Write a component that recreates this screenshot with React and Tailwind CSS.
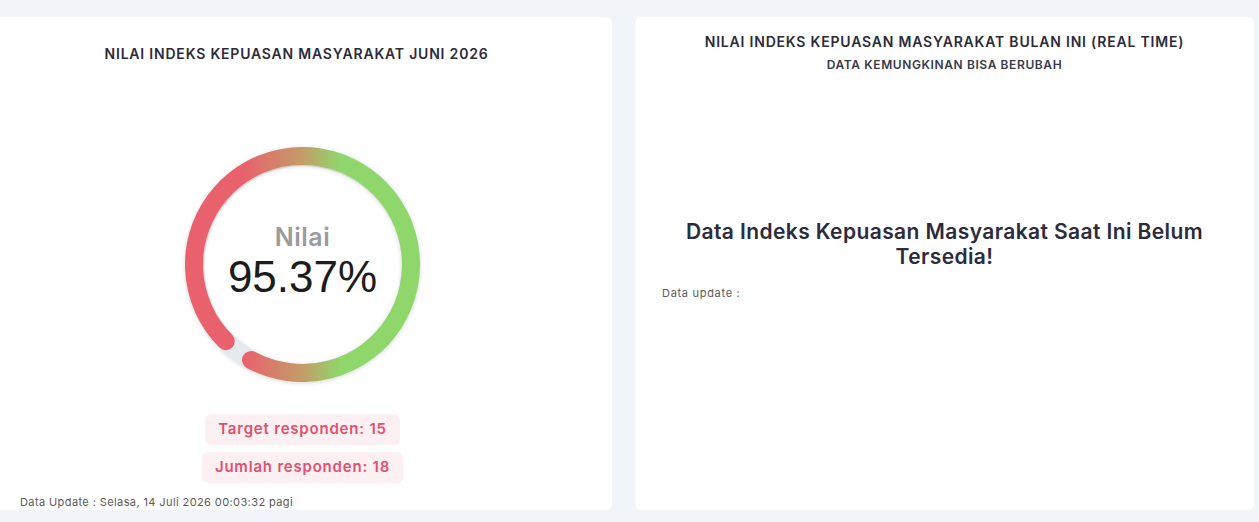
import React from "react"

const score = 95.37

// point on the ring, angle measured clockwise from 12 o'clock
function polar(c, r, deg) {
  const a = ((deg - 90) * Math.PI) / 180
  return [c + r * Math.cos(a), c + r * Math.sin(a)]
}

function Gauge({ value }) {
  const size = 235
  const stroke = 18
  const c = size / 2
  const r = (size - stroke) / 2
  const sweep = (360 * value) / 100
  const start = 225
  const [x1, y1] = polar(c, r, start)
  const [xm, ym] = polar(c, r, start + sweep / 2)
  const [x2, y2] = polar(c, r, start + sweep)
  const d = `M ${x1} ${y1} A ${r} ${r} 0 0 1 ${xm} ${ym} A ${r} ${r} 0 0 1 ${x2} ${y2}`

  return (
    <div className="grid place-items-center w-[235px] h-[235px]">
      <svg
        width={size}
        height={size}
        viewBox={`0 0 ${size} ${size}`}
        className="col-start-1 row-start-1 drop-shadow-[0_1px_2px_rgba(0,0,0,0.15)]"
      >
        <defs>
          <linearGradient id="ring" gradientUnits="userSpaceOnUse" x1="0" y1="0" x2={size} y2="0">
            <stop offset="0.25" stopColor="#e9616c" />
            <stop offset="0.5" stopColor="#c39d68" />
            <stop offset="0.66" stopColor="#8fd66b" />
          </linearGradient>
        </defs>
        <circle cx={c} cy={c} r={r} fill="none" stroke="#e4eaee" strokeWidth={stroke} />
        <path d={d} fill="none" stroke="url(#ring)" strokeWidth={stroke} strokeLinecap="round" />
      </svg>
      <div className="col-start-1 row-start-1 w-[198px] h-[198px] rounded-full bg-white shadow-[0_0_8px_rgba(0,0,0,0.22)] flex flex-col items-center justify-center">
        <div className="text-[25px] leading-[30px] font-semibold text-[#9b9b9b] tracking-[0.5px] mt-[-6px]">Nilai</div>
        <div className="font-['Liberation_Sans',Arial,sans-serif] text-[44px] leading-[50px] text-[#1c1c1c]">
          {value.toFixed(2)}%
        </div>
      </div>
    </div>
  )
}

function Badge({ children }) {
  return (
    <div className="px-[13px] h-[31px] flex items-center rounded-md bg-[#fdf0f3] text-[15px] font-semibold tracking-[0.8px] text-[#e0506f]">
      {children}
    </div>
  )
}

export default function App() {
  return (
    <div className="min-h-[522px] bg-[#f1f4f8] pt-[17px] font-['Inter','Noto_Sans',sans-serif] overflow-hidden">
      <div className="-ml-[7px] flex gap-[23px]">
        {/* last month's score */}
        <section className="w-[619px] h-[493px] shrink-0 rounded-md bg-white px-[27px] flex flex-col">
          <header className="h-[72px] flex items-center justify-center pr-[12px]">
            <h2 className="text-[14px] font-semibold text-[#2b2b3a] tracking-[0.8px]">
              NILAI INDEKS KEPUASAN MASYARAKAT JUNI 2026
            </h2>
          </header>
          <div className="flex justify-center mt-[58px]">
            <Gauge value={score} />
          </div>
          <div className="flex flex-col items-center gap-[7px] mt-[32px]">
            <Badge>Target responden: 15</Badge>
            <Badge>Jumlah responden: 18</Badge>
          </div>
          <p className="mt-[11px] text-[11px] leading-4 tracking-[0.4px] text-[#5a5a5a]">
            Data Update : Selasa, 14 Juli 2026 00:03:32 pagi
          </p>
        </section>

        {/* current month, live */}
        <section className="w-[619px] h-[493px] shrink-0 rounded-md bg-white px-[27px] flex flex-col">
          <header className="h-[72px] flex flex-col items-center justify-center">
            <h2 className="text-[14px] leading-[20px] font-semibold text-[#2b2b3a] tracking-[0.8px]">
              NILAI INDEKS KEPUASAN MASYARAKAT BULAN INI (REAL TIME)
            </h2>
            <p className="text-[12px] leading-[20px] font-semibold text-[#3a3a48] tracking-[0.6px] mt-[3px]">
              DATA KEMUNGKINAN BISA BERUBAH
            </p>
          </header>
          <h3 className="mt-[130px] text-center text-[21px] leading-[25px] font-semibold text-[#2b2b3d] tracking-[0.4px] px-[20px]">
            Data Indeks Kepuasan Masyarakat Saat Ini Belum Tersedia!
          </h3>
          <p className="mt-[16px] text-[11px] leading-4 tracking-[0.7px] text-[#5a5a5a]">Data update :</p>
        </section>
      </div>
    </div>
  )
}
